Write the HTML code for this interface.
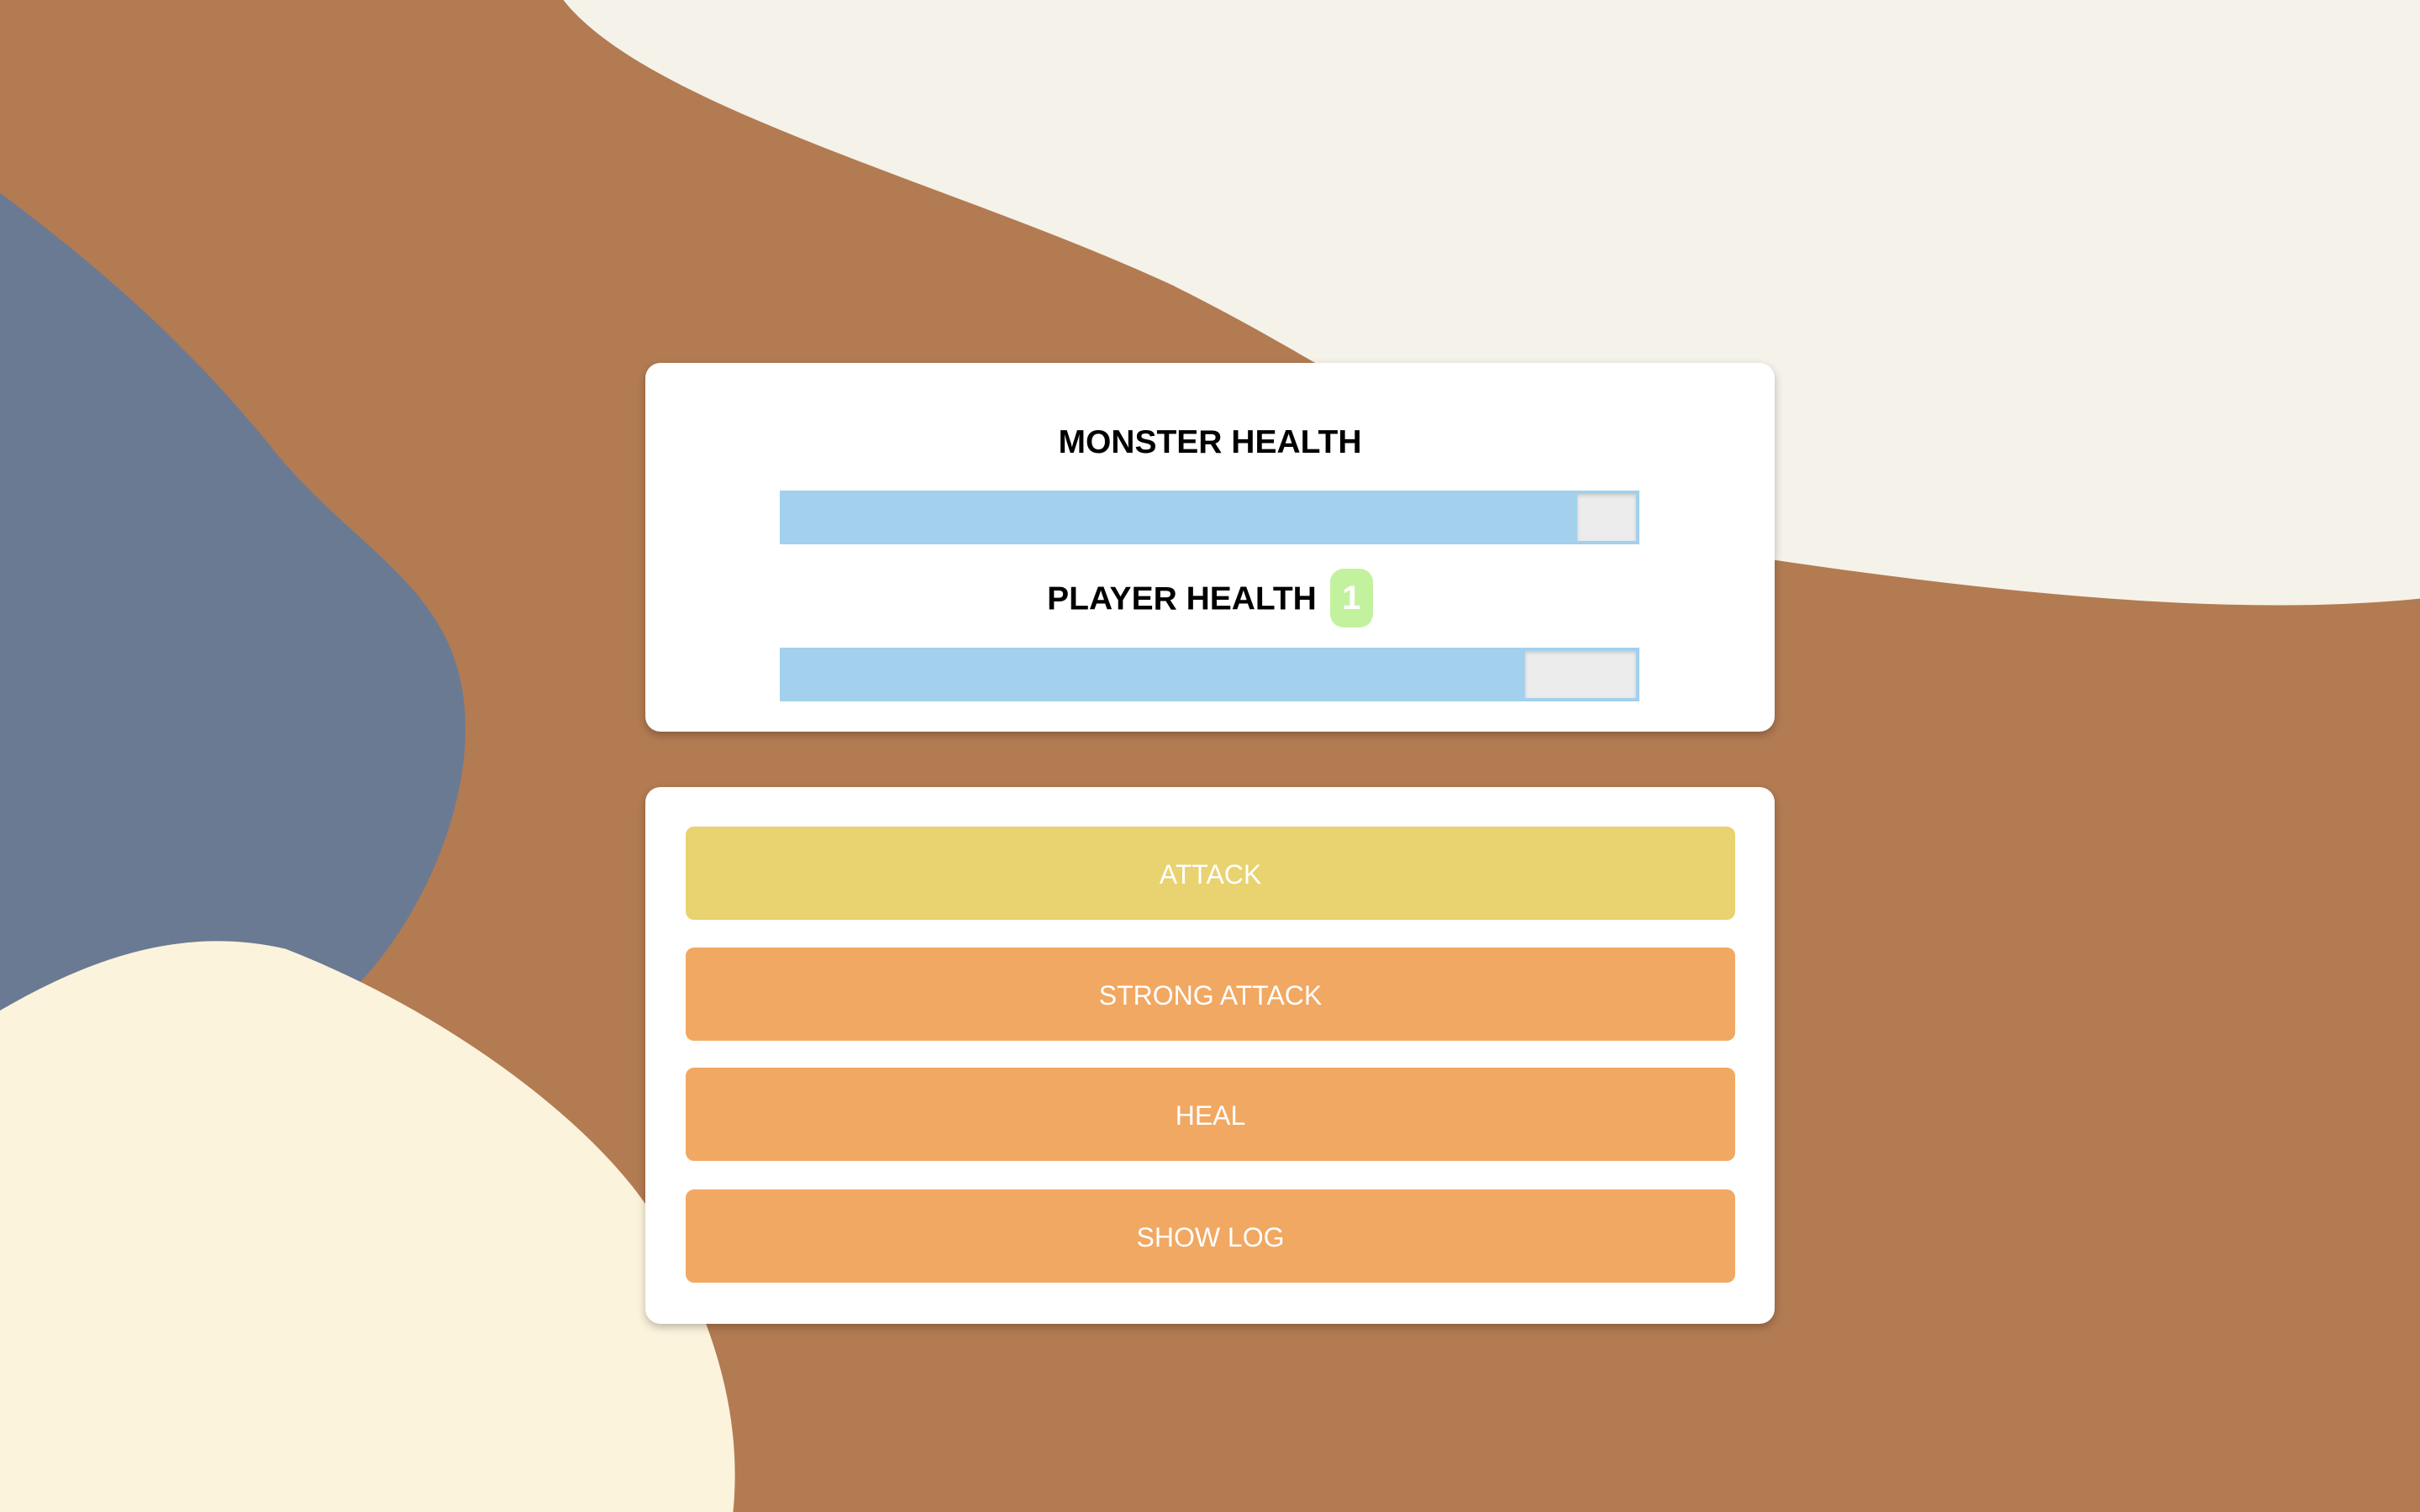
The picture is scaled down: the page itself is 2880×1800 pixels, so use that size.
<!DOCTYPE html>
<html><head><meta charset="utf-8"><style>
html,body{margin:0;padding:0;width:2880px;height:1800px;overflow:hidden;background:#b37b52;font-family:"Liberation Sans",Arial,sans-serif;}
svg.bg{position:absolute;left:0;top:0;width:2880px;height:1800px;}
.card{position:absolute;left:768px;width:1344px;background:#fff;border-radius:18px;box-shadow:0 4px 10px rgba(0,0,0,0.25);}
#c1{top:432px;height:439px;}
#c2{top:937px;height:639px;}
.title{position:absolute;left:0;width:100%;text-align:center;font-size:39px;font-weight:bold;color:#000;line-height:1;}
.bar{position:absolute;left:160px;width:1023px;height:64px;background:#a3d0ed;}
.bar .g{position:absolute;top:4px;right:4px;bottom:4px;background:#ececec;box-shadow:inset 0 2px 4px rgba(0,0,0,0.15);}
.badge{display:inline-block;vertical-align:middle;width:51px;height:70px;border-radius:16px;background:#c3f29f;color:#fff;font-size:40px;line-height:70px;text-align:center;margin-left:16px;position:relative;top:-3px;}
.btn{position:absolute;left:48px;width:1249px;height:111px;border-radius:10px;background:#f1a862;color:#fff;font-size:32px;text-align:center;line-height:114px;}
</style></head><body>
<svg class="bg" viewBox="0 0 1568 980" preserveAspectRatio="none">
<path d="M365,0 C420,70 620,120 760,185 C820,215 850,235 900,262 C1000,310 1080,350 1150,363 C1300,385 1450,400 1568,388 L1568,0 Z" fill="#f5f2ea"/>
<path d="M0,125 C60,170 120,220 180,295 C230,355 290,380 300,450 C310,520 270,600 230,640 L0,660 Z" fill="#6b7a93"/>
<path d="M0,655 C60,620 120,600 185,615 C300,660 400,740 430,800 C470,870 480,930 475,980 L0,980 Z" fill="#fcf3dc"/>
</svg>
<div class="card" id="c1">
<div class="title" style="top:75px">MONSTER HEALTH</div>
<div class="bar" style="top:152px"><div class="g" style="width:70px"></div></div>
<div class="title" style="top:248px">PLAYER HEALTH<span class="badge">1</span></div>
<div class="bar" style="top:339px"><div class="g" style="width:132px"></div></div>
</div>
<div class="card" id="c2">
<div class="btn" style="top:47px;background:#e9d270">ATTACK</div>
<div class="btn" style="top:191px">STRONG ATTACK</div>
<div class="btn" style="top:334px">HEAL</div>
<div class="btn" style="top:479px">SHOW LOG</div>
</div>
</body></html>
